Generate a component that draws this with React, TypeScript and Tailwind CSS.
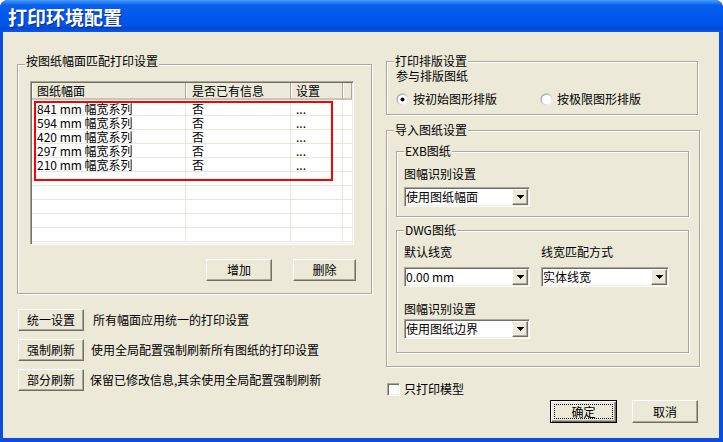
import type { ReactNode } from "react";

const FONT = "font-['Noto_Sans_CJK_SC','Liberation_Sans',sans-serif]";

// classic raised / sunken bevels
const RAISED =
  "bg-[#ece9d8] border border-t-white border-l-white border-r-[#716f64] border-b-[#716f64] shadow-[inset_-1px_-1px_0_#aca899]";
const SUNKEN =
  "bg-white border border-t-[#aca899] border-l-[#aca899] border-r-white border-b-white shadow-[inset_1px_1px_0_#716f64,inset_-1px_-1px_0_#f1efe2]";

const rows = [
  { size: "841 mm 幅宽系列", has: "否", set: "..." },
  { size: "594 mm 幅宽系列", has: "否", set: "..." },
  { size: "420 mm 幅宽系列", has: "否", set: "..." },
  { size: "297 mm 幅宽系列", has: "否", set: "..." },
  { size: "210 mm 幅宽系列", has: "否", set: "..." },
  null,
  null,
  null,
  null,
  null,
];

function GroupBox({
  label,
  className,
  labelClass = "-top-[8px]",
  children,
}: {
  label: string;
  className: string;
  labelClass?: string;
  children?: ReactNode;
}) {
  return (
    <div
      className={`relative shrink-0 border border-[#aca899] shadow-[inset_1px_1px_0_#fff,1px_1px_0_#fff] ${className}`}
    >
      <span className={`absolute left-[7px] ${labelClass} bg-[#ece9d8] px-[1px] leading-[14px] whitespace-nowrap`}>
        {label}
      </span>
      {children}
    </div>
  );
}

function Button({ label, className = "" }: { label: string; className?: string }) {
  return (
    <button className={`${RAISED} flex items-center justify-center leading-[14px] ${className}`}>
      {label}
    </button>
  );
}

function Combo({ value, className = "" }: { value: string; className?: string }) {
  return (
    <div className={`${SUNKEN} flex h-[20px] p-[1px] ${className}`}>
      <div className="flex-1 leading-[16px] whitespace-nowrap overflow-hidden">{value}</div>
      <div className={`${RAISED} w-[16px] h-[16px] flex items-center justify-center`}>
        <svg width="7" height="4" viewBox="0 0 7 4" shapeRendering="crispEdges">
          <path d="M0 0h7v1h-1v1h-1v1h-1v1h-1v-1h-1v-1h-1v-1h-1z" fill="#000" />
        </svg>
      </div>
    </div>
  );
}

function Radio({ checked }: { checked?: boolean }) {
  return (
    <svg width="13" height="13" viewBox="0 0 13 13" className="shrink-0">
      <defs>
        <linearGradient id={checked ? "rg1" : "rg2"} x1="0" y1="0" x2="1" y2="1">
          <stop offset="0" stopColor="#9c9a8f" />
          <stop offset="0.5" stopColor="#d8d6cb" />
          <stop offset="1" stopColor="#ffffff" />
        </linearGradient>
      </defs>
      <circle cx="6.5" cy="6.5" r="6.2" fill={`url(#${checked ? "rg1" : "rg2"})`} />
      <circle cx="6.5" cy="6.5" r="4.6" fill="#fff" />
      {checked && <circle cx="6.5" cy="6.5" r="2" fill="#000" />}
    </svg>
  );
}

export default function App() {
  return (
    <div className={`${FONT} w-[723px] h-[442px] flex flex-col rounded-t-[8px] overflow-hidden bg-[#0b4ddc] text-[12px] text-black`}>
      {/* Title bar */}
      <div className="h-[32px] shrink-0 flex items-center bg-[linear-gradient(to_bottom,#4a9cff_0px,#2f86fb_2px,#0a5fea_5px,#0058ee_45%,#0054e6_80%,#0047d4_88%,#0a5ae6_100%)]">
        <span className="ml-[8px] mt-[1px] text-[19px] font-bold leading-[24px] text-white [text-shadow:1px_1px_0_#0a2a8f]">
          打印环境配置
        </span>
      </div>

      {/* Body */}
      <div className="flex-1 ml-[3px] mr-[4px] mb-[4px] bg-[#ece9d8] flex items-start">
        {/* Left column */}
        <div className="ml-[14px] mt-[32px] w-[355px] flex flex-col">
          <GroupBox label="按图纸幅面匹配打印设置" labelClass="-top-[11px]" className="w-[355px] h-[230px]">
            <div className={`${SUNKEN} relative ml-[12px] mt-[16px] w-[324px] h-[164px] p-[1px] overflow-hidden`}>
              <div className="flex h-[17px] bg-[#ebeadb]">
                {[
                  { t: "图纸幅面", w: "w-[154px] pl-[5px]" },
                  { t: "是否已有信息", w: "w-[105px] pl-[6px]" },
                  { t: "设置", w: "w-[52px] pl-[5px]" },
                  { t: "", w: "flex-1" },
                ].map((h, i) => (
                  <div
                    key={i}
                    className={`${h.w} h-[17px] leading-[15px] border-r border-b-2 border-r-[#aca899] border-b-[#c9c6b6] shadow-[inset_1px_0_0_#fff] whitespace-nowrap`}
                  >
                    {h.t}
                  </div>
                ))}
              </div>
              <div className="h-[2px]" />
              {rows.map((r, i) => (
                <div key={i} className="flex h-[14px] border-b border-[#e9e7dc]">
                  <div className="w-[154px] pl-[5px] leading-[13px] border-r border-[#e9e7dc] whitespace-nowrap">
                    {r?.size}
                  </div>
                  <div className="w-[105px] pl-[6px] leading-[13px] border-r border-[#e9e7dc]">{r?.has}</div>
                  <div className="w-[52px] pl-[5px] leading-[13px] border-r border-[#e9e7dc]">{r?.set}</div>
                  <div className="flex-1" />
                </div>
              ))}
              {/* red annotation */}
              <div className="absolute left-[3px] top-[19px] w-[299px] h-[80px] border-2 border-[#ff0000] pointer-events-none" />
            </div>
            <div className="mt-[14px] flex justify-end gap-[21px] pr-[15px]">
              <Button label="增加" className="w-[66px] h-[22px]" />
              <Button label="删除" className="w-[63px] h-[22px]" />
            </div>
          </GroupBox>

          <div className="mt-[15px] ml-[1px] flex flex-col gap-[8px]">
            <div className="flex items-center">
              <Button label="统一设置" className="w-[66px] h-[22px]" />
              <span className="ml-[9px] leading-[14px]">所有幅面应用统一的打印设置</span>
            </div>
            <div className="flex items-center">
              <Button label="强制刷新" className="w-[66px] h-[22px]" />
              <span className="ml-[7px] leading-[14px]">使用全局配置强制刷新所有图纸的打印设置</span>
            </div>
            <div className="flex items-center">
              <Button label="部分刷新" className="w-[66px] h-[22px]" />
              <span className="ml-[6px] leading-[14px]">保留已修改信息,其余使用全局配置强制刷新</span>
            </div>
          </div>
        </div>

        {/* Right column */}
        <div className="ml-[14px] w-[314px] flex flex-col">
          <GroupBox label="打印排版设置" className="mt-[29px] w-[312px] h-[54px]">
            <div className="mt-[7px] ml-[9px] leading-[14px]">参与排版图纸</div>
            <div className="mt-[9px] ml-[9px] flex items-center h-[14px]">
              <label className="w-[144px] flex items-center gap-[4px]">
                <Radio checked />
                <span className="leading-[14px]">按初始图形排版</span>
              </label>
              <label className="flex items-center gap-[4px]">
                <Radio />
                <span className="leading-[14px]">按极限图形排版</span>
              </label>
            </div>
          </GroupBox>

          <GroupBox label="导入图纸设置" className="mt-[15px] w-[314px] h-[237px]">
            <GroupBox label="EXB图纸" className="mt-[20px] ml-[9px] w-[293px] h-[66px]">
              <div className="mt-[15px] ml-[7px] leading-[14px]">图幅识别设置</div>
              <Combo value="使用图纸幅面" className="mt-[6px] ml-[7px] w-[126px]" />
            </GroupBox>

            <GroupBox label="DWG图纸" className="mt-[13px] ml-[9px] w-[293px] h-[123px]">
              <div className="mt-[14px] ml-[7px] flex leading-[14px]">
                <span className="w-[137px]">默认线宽</span>
                <span>线宽匹配方式</span>
              </div>
              <div className="mt-[8px] ml-[7px] flex">
                <Combo value="0.00 mm" className="w-[126px]" />
                <Combo value="实体线宽" className="ml-[11px] w-[128px]" />
              </div>
              <div className="mt-[15px] ml-[7px] leading-[14px]">图幅识别设置</div>
              <Combo value="使用图纸边界" className="mt-[3px] ml-[7px] w-[126px]" />
            </GroupBox>
          </GroupBox>

          <label className="mt-[15px] ml-[1px] h-[14px] flex items-center gap-[4px]">
            <span className={`${SUNKEN} w-[13px] h-[13px] shrink-0`} />
            <span className="leading-[14px]">只打印模型</span>
          </label>

          <div className="mt-[4px] flex justify-end gap-[15px] pr-[2px]">
            <button className="w-[67px] h-[23px] p-[3px] bg-[#ece9d8] border border-black shadow-[inset_1px_1px_0_#fff,inset_-1px_-1px_0_#716f64,inset_-2px_-2px_0_#aca899]">
              <div className="w-full h-full border border-dotted border-black flex items-center justify-center leading-[14px]">
                确定
              </div>
            </button>
            <Button label="取消" className="w-[66px] h-[23px]" />
          </div>
        </div>
      </div>
    </div>
  );
}
